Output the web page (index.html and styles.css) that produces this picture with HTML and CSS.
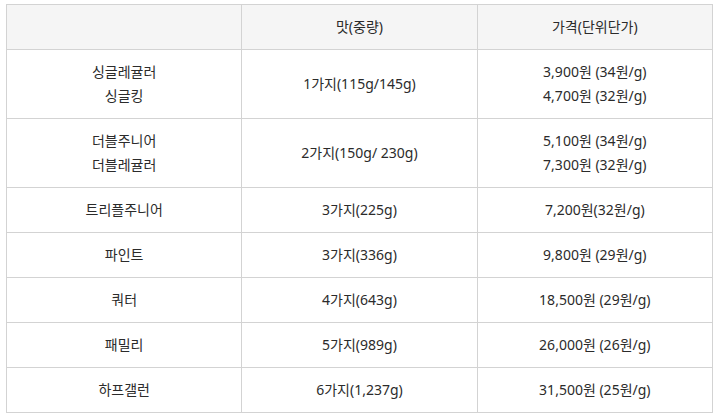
FILE: index.html
```html
<!DOCTYPE html>
<html lang="ko">
<head>
<meta charset="utf-8">
<link rel="stylesheet" href="styles.css">
</head>
<body>
<table class="price">
  <thead>
    <tr><th></th><th>맛(중량)</th><th>가격(단위단가)</th></tr>
  </thead>
  <tbody>
    <tr><td>싱글레귤러<br>싱글킹</td><td>1가지(115g/145g)</td><td>3,900원 (34원/g)<br>4,700원 (32원/g)</td></tr>
    <tr><td>더블주니어<br>더블레귤러</td><td>2가지(150g/ 230g)</td><td>5,100원 (34원/g)<br>7,300원 (32원/g)</td></tr>
    <tr><td>트리플주니어</td><td>3가지(225g)</td><td>7,200원(32원/g)</td></tr>
    <tr><td>파인트</td><td>3가지(336g)</td><td>9,800원 (29원/g)</td></tr>
    <tr><td>쿼터</td><td>4가지(643g)</td><td>18,500원 (29원/g)</td></tr>
    <tr><td>패밀리</td><td>5가지(989g)</td><td>26,000원 (26원/g)</td></tr>
    <tr><td>하프갤런</td><td>6가지(1,237g)</td><td>31,500원 (25원/g)</td></tr>
  </tbody>
</table>
</body>
</html>
```
FILE: styles.css
```css
html, body { margin: 0; padding: 0; background: #fff; }
body { padding: 4px 0 0 6px; }
.price {
  border-collapse: collapse;
  table-layout: fixed;
  width: 707px;
  font-family: "Noto Sans", "Noto Sans CJK KR", sans-serif;
  font-size: 14px;
  line-height: 24px;
  color: #2b2b2b;
}
.price th, .price td {
  border: 1px solid #d3d3d3;
  text-align: center;
  vertical-align: middle;
  padding: 10px 0;
  font-weight: normal;
  height: 24px;
}
.price th { background: #f5f5f5; }
```
